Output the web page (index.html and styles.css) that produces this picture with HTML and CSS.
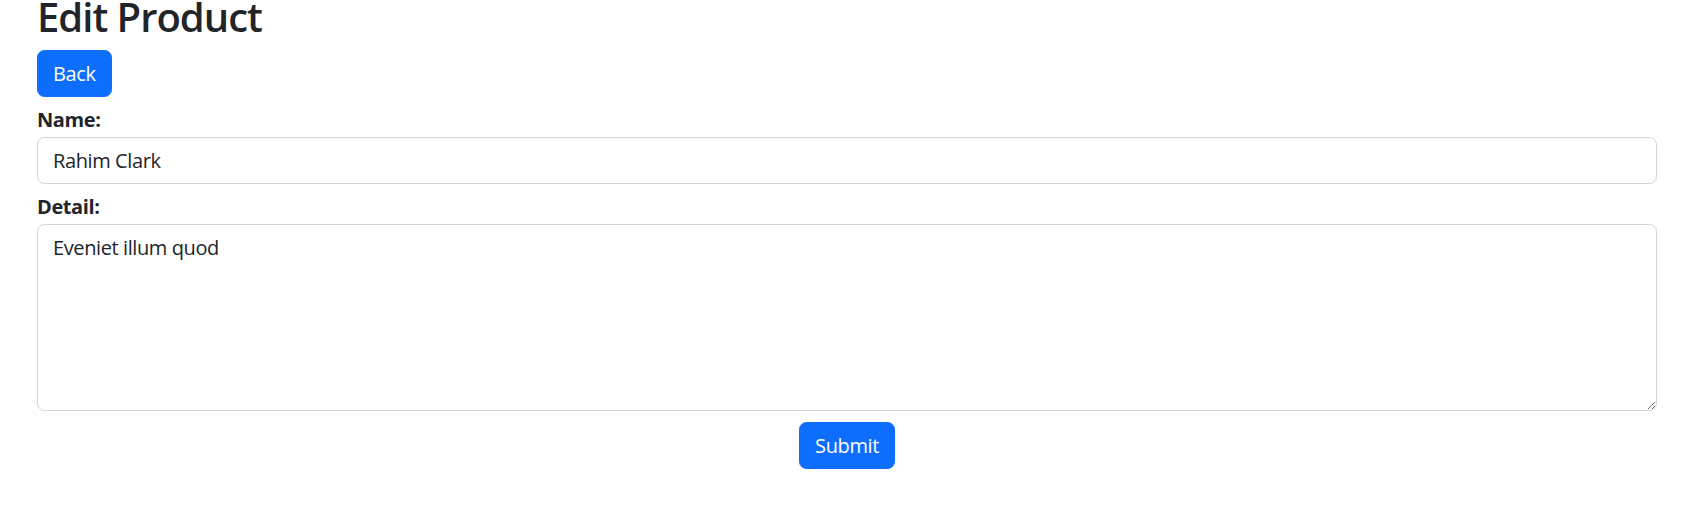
FILE: index.html
```html
<!DOCTYPE html>
<html lang="en">
<head>
<meta charset="utf-8">
<title>Edit Product</title>
<link rel="stylesheet" href="styles.css">
</head>
<body>
<div class="container">
  <h1 class="title">Edit Product</h1>
  <a class="btn" href="#">Back</a>
  <form class="form">
    <div class="field">
      <label class="label" for="name">Name:</label>
      <input class="control" id="name" type="text" value="Rahim Clark">
    </div>
    <div class="field">
      <label class="label" for="detail">Detail:</label>
      <textarea class="control area" id="detail">Eveniet illum quod</textarea>
    </div>
    <div class="actions">
      <button class="btn" type="submit">Submit</button>
    </div>
  </form>
</div>
</body>
</html>
```
FILE: styles.css
```css
* { box-sizing: border-box; }
html, body { margin: 0; padding: 0; background: #fff; }
body {
  font-family: "Open Sans", "Noto Sans", "Liberation Sans", sans-serif;
  font-size: 20px;
  line-height: 1.5;
  letter-spacing: -0.4px;
  color: #212529;
}
.container { padding: 0 37px; }
.title {
  margin: 0 0 16px;
  font-size: 40px;
  font-weight: 600;
  line-height: 34px;
  letter-spacing: -1px;
}
.btn {
  display: inline-block;
  padding: 7.5px 15px;
  font-family: inherit;
  font-size: 20px;
  line-height: 30px;
  letter-spacing: -0.4px;
  color: #fff;
  background: #0d6efd;
  border: 1px solid #0d6efd;
  border-radius: 7.5px;
  text-decoration: none;
  cursor: pointer;
}
.form { margin-top: 8px; }
.field { display: flex; flex-direction: column; margin-bottom: 8px; }
.label { font-weight: 700; line-height: 30px; margin-bottom: 2px; }
.control {
  display: block;
  width: 100%;
  padding: 7.5px 15px;
  font-family: inherit;
  font-size: 20px;
  line-height: 30px;
  letter-spacing: -0.4px;
  color: #212529;
  background: #fff;
  border: 1px solid #ced4da;
  border-radius: 7.5px;
}
.area { height: 187px; resize: vertical; }
.actions { display: flex; justify-content: center; padding-top: 3px; }
```
